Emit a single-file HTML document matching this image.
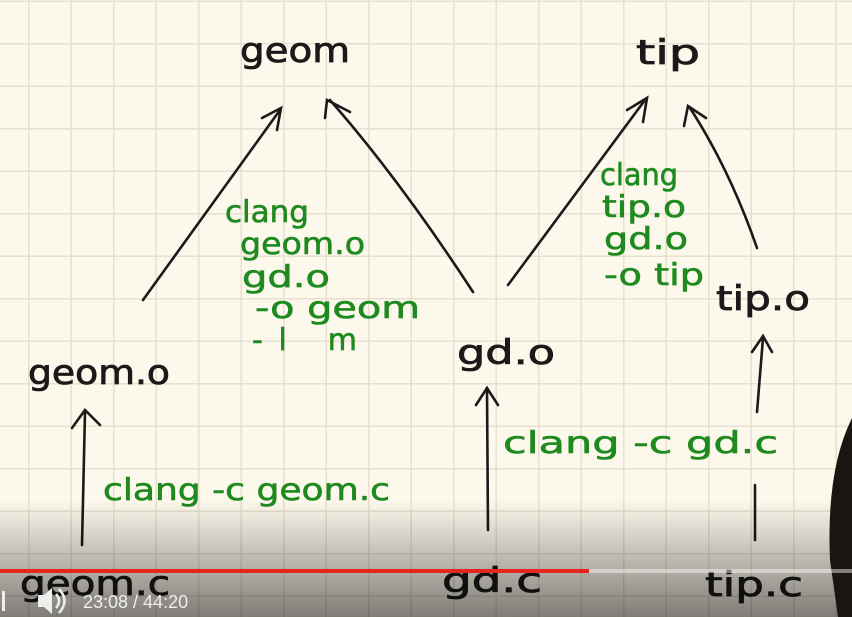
<!DOCTYPE html>
<html><head><style>
html,body{margin:0;padding:0;width:852px;height:617px;overflow:hidden;background:#fdf8ec}
</style></head><body>
<svg width="852" height="617" xmlns="http://www.w3.org/2000/svg">
<defs>
<pattern id="g" x="28" y="43" width="42.5" height="42.5" patternUnits="userSpaceOnUse">
<path d="M0 0H42.5M0 0V42.5" stroke="#e8dfcf" stroke-width="3" fill="none"/>
</pattern>
<linearGradient id="sh" x1="0" y1="0" x2="0" y2="1">
<stop offset="0" stop-color="#000" stop-opacity="0"/>
<stop offset="1" stop-color="#000" stop-opacity="0.5"/>
</linearGradient>
</defs>
<rect width="852" height="617" fill="#fdf8ec"/>
<rect width="852" height="617" fill="url(#g)"/>
<g font-family="'DejaVu Sans','Liberation Sans',sans-serif" font-size="34" fill="#1a1a1a" stroke="#1a1a1a" stroke-width="0.8">
<text x="240" y="62" textLength="110" lengthAdjust="spacingAndGlyphs">geom</text>
<text x="636" y="64" textLength="64" lengthAdjust="spacingAndGlyphs">tip</text>
<text x="28" y="384" textLength="142" lengthAdjust="spacingAndGlyphs">geom.o</text>
<text x="457" y="364" textLength="98" lengthAdjust="spacingAndGlyphs">gd.o</text>
<text x="716" y="310" textLength="94" lengthAdjust="spacingAndGlyphs">tip.o</text>
<text x="20" y="595" textLength="150" lengthAdjust="spacingAndGlyphs">geom.c</text>
<text x="442" y="592" textLength="100" lengthAdjust="spacingAndGlyphs">gd.c</text>
<text x="705" y="596" textLength="98" lengthAdjust="spacingAndGlyphs">tip.c</text>
</g>
<g font-family="'DejaVu Sans','Liberation Sans',sans-serif" font-size="30" fill="#1f8a1f" stroke="#1f8a1f" stroke-width="0.6">
<text x="225" y="222" textLength="84" lengthAdjust="spacingAndGlyphs">clang</text>
<text x="240" y="254" textLength="125" lengthAdjust="spacingAndGlyphs">geom.o</text>
<text x="242" y="287" textLength="88" lengthAdjust="spacingAndGlyphs">gd.o</text>
<text x="255" y="318" textLength="165" lengthAdjust="spacingAndGlyphs">-o geom</text>
<text x="252" y="350" textLength="105" lengthAdjust="spacing">-l m</text>
<text x="600" y="185" textLength="78" lengthAdjust="spacingAndGlyphs">clang</text>
<text x="602" y="217" textLength="84" lengthAdjust="spacingAndGlyphs">tip.o</text>
<text x="604" y="249" textLength="84" lengthAdjust="spacingAndGlyphs">gd.o</text>
<text x="604" y="285" textLength="100" lengthAdjust="spacingAndGlyphs">-o tip</text>
<text x="103" y="500" textLength="287" lengthAdjust="spacingAndGlyphs">clang -c geom.c</text>
<text x="503" y="453" textLength="275" lengthAdjust="spacingAndGlyphs">clang -c gd.c</text>
</g>
<g stroke="#1a1a1a" stroke-width="2.6" fill="none" stroke-linecap="round">
<path d="M143 300 L280 110 M262 118 L281 108 L277 130"/>
<path d="M473 292 Q400 180 330 100 M325 118 L327 100 L350 112"/>
<path d="M508 285 L645 100 M627 110 L647 98 L643 122"/>
<path d="M757 248 Q730 170 690 108 M684 126 L688 106 L706 118"/>
<path d="M82 545 L85 412 M72 428 L85 410 L100 425"/>
<path d="M488 530 L487 390 M476 405 L487 388 L498 405"/>
<path d="M757 412 L763 338 M752 352 L763 336 L772 352"/>
<path d="M755 485 L755 540"/>
</g>
<rect x="0" y="500" width="852" height="117" fill="url(#sh)"/>
<path d="M838 617 L830 560 Q826 470 852 418 L852 617 Z" fill="#1b1512"/>
<rect x="0" y="569" width="852" height="4" fill="rgba(255,255,255,0.45)"/>
<rect x="0" y="569" width="589" height="4" fill="#e52620"/>
<rect x="2" y="591" width="3" height="20" fill="#eee"/>
<path d="M38 595 H44 L52 588 V614 L44 607 H38 Z" fill="#eee"/>
<path d="M56 594 Q62 601 56 608 M59 589 Q70 601 59 613" stroke="#eee" stroke-width="2.5" fill="none"/>
<text x="83" y="608" font-family="'Liberation Sans',sans-serif" font-size="18" fill="#eee">23:08 / 44:20</text>
</svg>
</body></html>
